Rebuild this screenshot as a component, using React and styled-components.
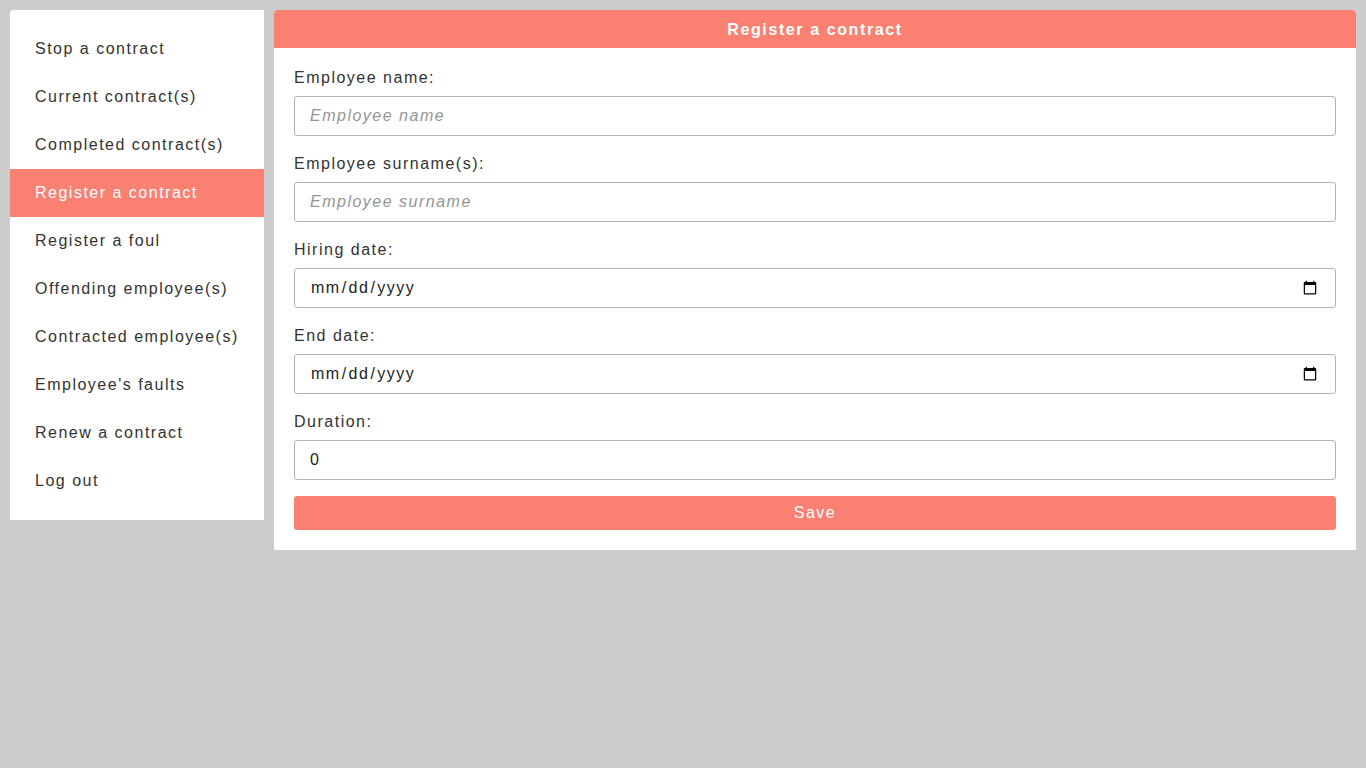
import React, { useState } from "react";
import styled, { createGlobalStyle } from "styled-components";

const GlobalStyle = createGlobalStyle`
  html, body {
    margin: 0;
    padding: 0;
    background: #cccccc;
    font-family: "Liberation Sans", Arial, sans-serif;
  }
  * { box-sizing: border-box; }
`;

const menu = [
  "Stop a contract",
  "Current contract(s)",
  "Completed contract(s)",
  "Register a contract",
  "Register a foul",
  "Offending employee(s)",
  "Contracted employee(s)",
  "Employee's faults",
  "Renew a contract",
  "Log out",
];

function App() {
  const [active, setActive] = useState("Register a contract");

  return (
    <Page>
      <GlobalStyle />
      <Sidebar>
        {menu.map((item) => (
          <MenuItem
            key={item}
            active={item === active ? 1 : 0}
            onClick={() => setActive(item)}
          >
            {item}
          </MenuItem>
        ))}
      </Sidebar>
      <Panel>
        <PanelHeader>Register a contract</PanelHeader>
        <Form onSubmit={(e) => e.preventDefault()}>
          <Label>Employee name:</Label>
          <Input type="text" placeholder="Employee name" />
          <Label>Employee surname(s):</Label>
          <Input type="text" placeholder="Employee surname" />
          <Label>Hiring date:</Label>
          <Input type="date" />
          <Label>End date:</Label>
          <Input type="date" />
          <Label>Duration:</Label>
          <Input type="number" defaultValue={0} />
          <SaveButton type="submit">Save</SaveButton>
        </Form>
      </Panel>
    </Page>
  );
}

export default App;

const Page = styled.div`
  display: flex;
  align-items: flex-start;
  gap: 10px;
  padding: 10px;
  min-height: 100vh;
`;

const Sidebar = styled.nav`
  width: 254px;
  flex-shrink: 0;
  background: #ffffff;
  border-radius: 4px 0 0 0;
  padding: 15px 0;
  display: flex;
  flex-direction: column;
`;

const MenuItem = styled.div`
  height: 48px;
  display: flex;
  align-items: center;
  padding-left: 25px;
  font-size: 16px;
  letter-spacing: 1.5px;
  color: ${(props) => (props.active ? "#ffffff" : "#333333")};
  background: ${(props) => (props.active ? "#fa8072" : "transparent")};
  cursor: pointer;
`;

const Panel = styled.main`
  flex: 1;
  background: #ffffff;
  border-radius: 4px 4px 0 0;
  overflow: hidden;
`;

const PanelHeader = styled.div`
  height: 38px;
  padding-top: 1px;
  display: flex;
  align-items: center;
  justify-content: center;
  background: #fa8072;
  color: #ffffff;
  font-size: 16px;
  font-weight: bold;
  letter-spacing: 1.6px;
`;

const Form = styled.form`
  display: flex;
  flex-direction: column;
  padding: 20px;
`;

const Label = styled.label`
  display: block;
  height: 18px;
  line-height: 18px;
  margin-top: 1px;
  margin-bottom: 9px;
  font-size: 16px;
  letter-spacing: 1.5px;
  color: #333333;
`;

const Input = styled.input`
  height: 40px;
  width: 100%;
  margin-bottom: 18px;
  padding: 0 15px;
  border: 1px solid #b4b4b4;
  border-radius: 3px;
  font-family: "Liberation Sans", Arial, sans-serif;
  font-size: 16px;
  letter-spacing: 1.5px;
  color: #222222;
  background: #ffffff;
  outline: none;

  &::placeholder {
    color: #959595;
    font-style: italic;
  }

  &:last-of-type {
    margin-bottom: 16px;
  }
`;

const SaveButton = styled.button`
  height: 34px;
  width: 100%;
  border: none;
  border-radius: 3px;
  background: #fa8072;
  color: #ffffff;
  font-family: "Liberation Sans", Arial, sans-serif;
  font-size: 16px;
  letter-spacing: 1.5px;
  cursor: pointer;
`;
